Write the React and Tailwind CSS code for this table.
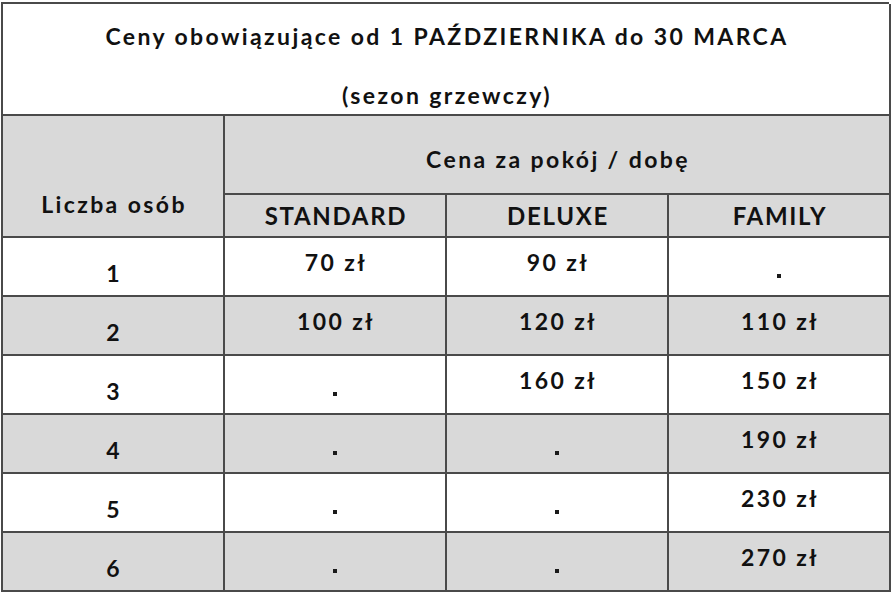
import React from "react";

const B = "border-[#4a4a4a]";

function Cell({ children, className = "" }) {
  return (
    <div className={`border-r-2 border-b-2 border-[#4a4a4a] flex justify-center ${className}`}>
      {children}
    </div>
  );
}

const rows = [
  ["1", "70 zł", "90 zł", null],
  ["2", "100 zł", "120 zł", "110 zł"],
  ["3", null, "160 zł", "150 zł"],
  ["4", null, null, "190 zł"],
  ["5", null, null, "230 zł"],
  ["6", null, null, "270 zł"],
];

function Dash() {
  return <div className="mt-[36px] w-[4px] h-[4px] bg-[#1a1a1a]" />;
}

function Price({ v }) {
  if (!v) return <Dash />;
  return <div className="mt-[10px] leading-[28px] pl-[2px]">{v}</div>;
}

export default function App() {
  return (
    <div
      className="w-[892px] h-[595px] bg-white pl-px pt-[2px] text-[#111111] font-bold tracking-[2.4px]"
      style={{ fontFamily: "Lato, 'Noto Sans', sans-serif" }}
    >
      <div className={`w-[888px] border-l-2 border-t-2 ${B} grid grid-cols-[222px_222px_222px_222px] grid-rows-[112px_79px_43px_59px_59px_59px_59px_59px_59px]`}>
        <Cell className="col-span-4 bg-white flex-col items-center text-[23px]">
          <div className="mt-[12px] leading-[28px] pl-[2px]">Ceny obowiązujące od 1 PAŹDZIERNIKA do 30 MARCA</div>
          <div className="mt-[31px] leading-[28px] pl-[2px]">(sezon grzewczy)</div>
        </Cell>
        <Cell className="row-span-2 bg-[#d9d9d9] items-start text-[23px]">
          <div className="mt-[74px] leading-[28px] pl-[2px]">Liczba osób</div>
        </Cell>
        <Cell className="col-span-3 bg-[#d9d9d9] items-start text-[23px]">
          <div className="mt-[29px] leading-[28px] pl-[2px]">Cena za pokój / dobę</div>
        </Cell>
        {["STANDARD", "DELUXE", "FAMILY"].map((t) => (
          <Cell key={t} className="bg-[#d9d9d9] items-center text-[24px] tracking-[0.07em]">
            <div className="leading-[28px] pl-[2px]">{t}</div>
          </Cell>
        ))}
        {rows.map((r, i) => {
          const bg = i % 2 === 1 ? "bg-[#d9d9d9]" : "bg-white";
          return (
            <React.Fragment key={r[0]}>
              <Cell className={`${bg} items-start text-[23px]`}>
                <div className="mt-[21px] leading-[28px] pl-[2px]">{r[0]}</div>
              </Cell>
              {r.slice(1).map((v, j) => (
                <Cell key={j} className={`${bg} items-start text-[23px]`}>
                  <Price v={v} />
                </Cell>
              ))}
            </React.Fragment>
          );
        })}
      </div>
    </div>
  );
}
